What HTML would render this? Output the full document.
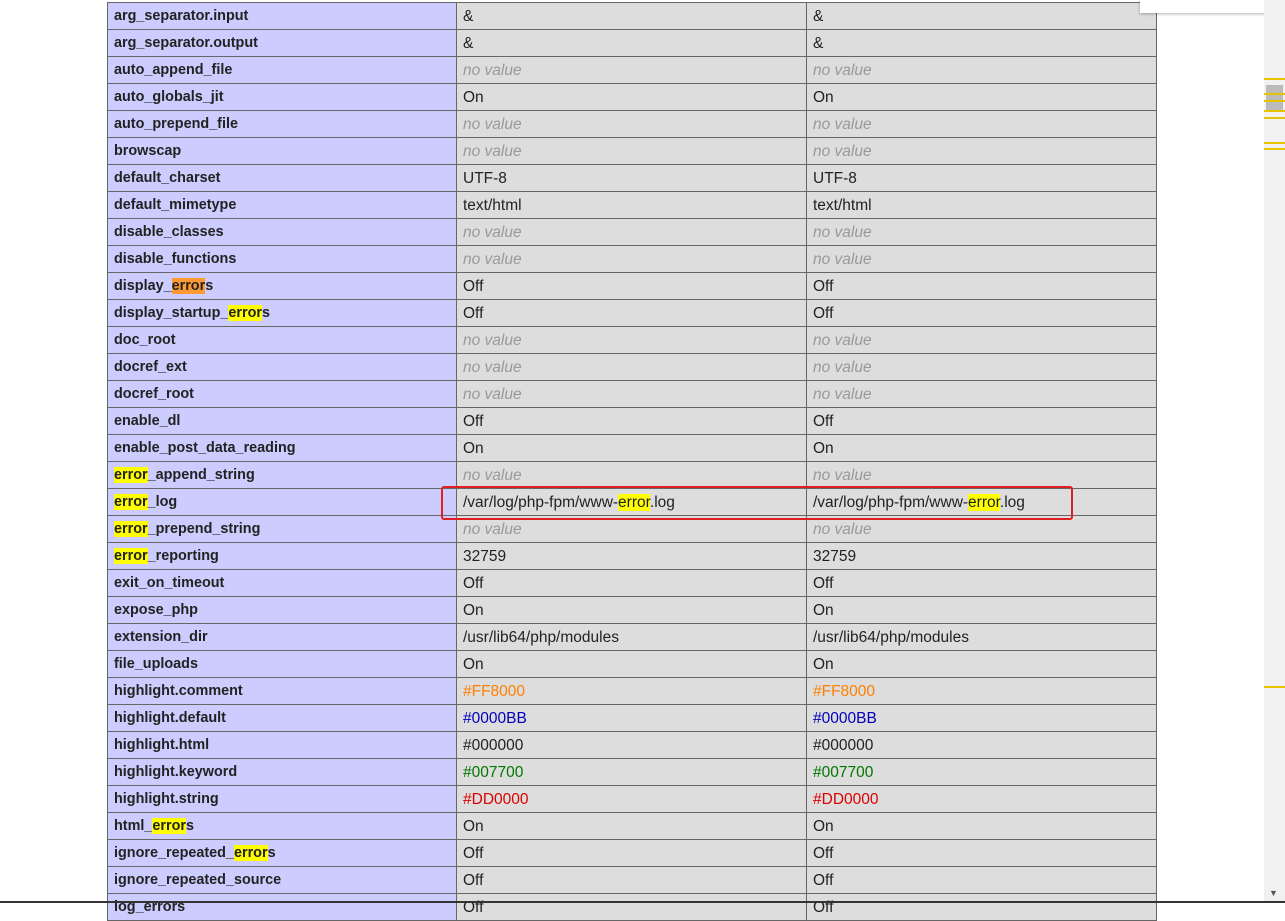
<!DOCTYPE html>
<html><head><meta charset="utf-8"><style>
body{margin:0;width:1285px;height:903px;overflow:hidden;background:#fff;position:relative;font-family:"Liberation Sans",sans-serif;font-size:14px;color:#222}
#t{position:absolute;left:107px;top:2px;width:1050px;border-top:1px solid #666}
.r{display:flex;height:26px;border-bottom:1px solid #666;line-height:27px}
.r div{border-right:1px solid #666;padding-left:6px;box-sizing:border-box;white-space:nowrap;overflow:hidden}
.e{width:350px;background:#ccf;font-weight:bold;border-left:1px solid #666;font-size:14.4px}
.v{width:350px;background:#ddd;font-size:15.5px}
.n{color:#999;font-style:italic}
.h{background:#ff0}
.ho{background:#f93}
#sb{position:absolute;left:1264px;top:0;width:21px;height:903px;background:#f1f1f1}
.m{position:absolute;left:1264px;width:21px;height:2px;background:#e6c200}
</style></head><body>
<div id="t">
<div class="r"><div class="e">arg_separator.input</div><div class="v">&amp;</div><div class="v">&amp;</div></div>
<div class="r"><div class="e">arg_separator.output</div><div class="v">&amp;</div><div class="v">&amp;</div></div>
<div class="r"><div class="e">auto_append_file</div><div class="v n">no value</div><div class="v n">no value</div></div>
<div class="r"><div class="e">auto_globals_jit</div><div class="v">On</div><div class="v">On</div></div>
<div class="r"><div class="e">auto_prepend_file</div><div class="v n">no value</div><div class="v n">no value</div></div>
<div class="r"><div class="e">browscap</div><div class="v n">no value</div><div class="v n">no value</div></div>
<div class="r"><div class="e">default_charset</div><div class="v">UTF-8</div><div class="v">UTF-8</div></div>
<div class="r"><div class="e">default_mimetype</div><div class="v">text/html</div><div class="v">text/html</div></div>
<div class="r"><div class="e">disable_classes</div><div class="v n">no value</div><div class="v n">no value</div></div>
<div class="r"><div class="e">disable_functions</div><div class="v n">no value</div><div class="v n">no value</div></div>
<div class="r"><div class="e">display_<span class="ho">error</span>s</div><div class="v">Off</div><div class="v">Off</div></div>
<div class="r"><div class="e">display_startup_<span class="h">error</span>s</div><div class="v">Off</div><div class="v">Off</div></div>
<div class="r"><div class="e">doc_root</div><div class="v n">no value</div><div class="v n">no value</div></div>
<div class="r"><div class="e">docref_ext</div><div class="v n">no value</div><div class="v n">no value</div></div>
<div class="r"><div class="e">docref_root</div><div class="v n">no value</div><div class="v n">no value</div></div>
<div class="r"><div class="e">enable_dl</div><div class="v">Off</div><div class="v">Off</div></div>
<div class="r"><div class="e">enable_post_data_reading</div><div class="v">On</div><div class="v">On</div></div>
<div class="r"><div class="e"><span class="h">error</span>_append_string</div><div class="v n">no value</div><div class="v n">no value</div></div>
<div class="r"><div class="e"><span class="h">error</span>_log</div><div class="v">/var/log/php-fpm/www-<span class="h">error</span>.log</div><div class="v">/var/log/php-fpm/www-<span class="h">error</span>.log</div></div>
<div class="r"><div class="e"><span class="h">error</span>_prepend_string</div><div class="v n">no value</div><div class="v n">no value</div></div>
<div class="r"><div class="e"><span class="h">error</span>_reporting</div><div class="v">32759</div><div class="v">32759</div></div>
<div class="r"><div class="e">exit_on_timeout</div><div class="v">Off</div><div class="v">Off</div></div>
<div class="r"><div class="e">expose_php</div><div class="v">On</div><div class="v">On</div></div>
<div class="r"><div class="e">extension_dir</div><div class="v">/usr/lib64/php/modules</div><div class="v">/usr/lib64/php/modules</div></div>
<div class="r"><div class="e">file_uploads</div><div class="v">On</div><div class="v">On</div></div>
<div class="r"><div class="e">highlight.comment</div><div class="v" style="color:#FF8000">#FF8000</div><div class="v" style="color:#FF8000">#FF8000</div></div>
<div class="r"><div class="e">highlight.default</div><div class="v" style="color:#0000BB">#0000BB</div><div class="v" style="color:#0000BB">#0000BB</div></div>
<div class="r"><div class="e">highlight.html</div><div class="v">#000000</div><div class="v">#000000</div></div>
<div class="r"><div class="e">highlight.keyword</div><div class="v" style="color:#007700">#007700</div><div class="v" style="color:#007700">#007700</div></div>
<div class="r"><div class="e">highlight.string</div><div class="v" style="color:#DD0000">#DD0000</div><div class="v" style="color:#DD0000">#DD0000</div></div>
<div class="r"><div class="e">html_<span class="h">error</span>s</div><div class="v">On</div><div class="v">On</div></div>
<div class="r"><div class="e">ignore_repeated_<span class="h">error</span>s</div><div class="v">Off</div><div class="v">Off</div></div>
<div class="r"><div class="e">ignore_repeated_source</div><div class="v">Off</div><div class="v">Off</div></div>
<div class="r"><div class="e">log_errors</div><div class="v">Off</div><div class="v">Off</div></div>
</div>
<div style="position:absolute;left:441px;top:486px;width:628px;height:30px;border:2px solid #e02020;border-radius:3px"></div>
<div style="position:absolute;left:1140px;top:0;width:145px;height:13px;background:#fff;box-shadow:0 1px 3px rgba(0,0,0,.3)"></div>
<div id="sb"></div>
<div style="position:absolute;left:1266px;top:85px;width:17px;height:26px;background:#bbb"></div>
<div class="m" style="top:78px"></div><div class="m" style="top:93px"></div><div class="m" style="top:100px"></div><div class="m" style="top:110px"></div><div class="m" style="top:117px"></div><div class="m" style="top:142px"></div><div class="m" style="top:148px"></div><div class="m" style="top:686px"></div>
<div style="position:absolute;left:1269px;top:888px;font-size:9px;color:#555">▼</div>
<div style="position:absolute;left:0;top:901px;width:1285px;height:2px;background:#333"></div>
</body></html>
